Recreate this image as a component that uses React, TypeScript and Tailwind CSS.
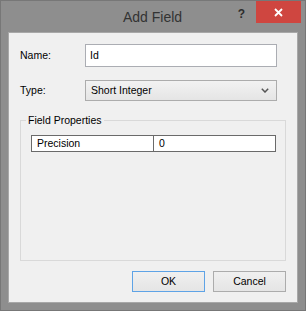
const FONT = { fontFamily: '"Liberation Sans", Arial, sans-serif' };

function Row({ label, children }: { label: string; children: React.ReactNode }) {
  return (
    <div className="flex items-center">
      <span className="w-[65px] text-[10.5px] text-black">{label}</span>
      {children}
    </div>
  );
}

export default function App() {
  return (
    <div className="h-[311px] w-[306px] border border-[#777] bg-[#8e8e8e]" style={FONT}>
      {/* title bar */}
      <div className="flex h-[31px] items-start">
        <span className="ml-[122px] mt-[7px] text-[14px] leading-[18px] text-[#333]">Add Field</span>
        <span className="ml-auto mt-[6px] text-[12px] font-bold leading-[14px] text-[#2c2c2c]">?</span>
        <div className="ml-[11px] mr-[4px] flex h-[22px] w-[45px] items-center justify-center bg-[#cf4640]">
          <svg width="9" height="9" viewBox="0 0 9 9">
            <path d="M1 1 L8 8 M8 1 L1 8" stroke="#fff" strokeWidth="1.8" />
          </svg>
        </div>
      </div>

      {/* client */}
      <div className="ml-[7px] h-[271px] w-[290px] border border-[#a8a8a8] bg-[#f0f0f0] px-[11px] pt-[11px]">
        <Row label="Name:">
          <div className="flex h-[23px] w-[192px] items-center border border-[#abadb3] bg-white pl-[4px] text-[10.5px] text-black">
            Id
          </div>
        </Row>
        <div className="mt-[13px]">
          <Row label="Type:">
            <div className="flex h-[21px] w-[192px] items-center justify-between border border-[#acacac] bg-gradient-to-b from-[#f2f2f2] to-[#e5e5e5] pl-[5px] pr-[7px] text-[10.5px] text-black">
              <span>Short Integer</span>
              <svg width="8" height="5" viewBox="0 0 8 5">
                <path d="M0.8 0.8 L4 4 L7.2 0.8" fill="none" stroke="#555" strokeWidth="1.5" />
              </svg>
            </div>
          </Row>
        </div>

        <fieldset className="mt-[12px] h-[148px] border border-[#d9d9d9]">
          <legend className="ml-[5px] px-[2px] text-[10.5px] leading-[14px] text-black">Field Properties</legend>
          <div className="ml-[10px] mt-[8px] flex h-[17px] w-[245px] border border-[#6a6a6a] bg-white text-[10.5px] text-black">
            <div className="flex w-[122px] items-center border-r border-[#6a6a6a] pl-[5px]">Precision</div>
            <div className="flex flex-1 items-center pl-[5px]">0</div>
          </div>
        </fieldset>

        <div className="mt-[10px] flex justify-end gap-[8px]">
          <button className="h-[21px] w-[73px] border border-[#5ea3e6] bg-gradient-to-b from-[#f0f0f0] to-[#e5e5e5] text-[10.5px] text-black">
            OK
          </button>
          <button className="h-[21px] w-[73px] border border-[#acacac] bg-gradient-to-b from-[#f0f0f0] to-[#e5e5e5] text-[10.5px] text-black">
            Cancel
          </button>
        </div>
      </div>
    </div>
  );
}
